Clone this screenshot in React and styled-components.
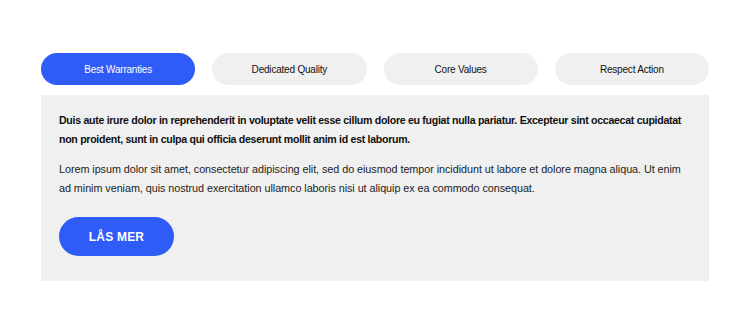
import React, { useState } from "react";
import styled, { createGlobalStyle } from "styled-components";

const GlobalStyle = createGlobalStyle`
  html, body {
    margin: 0;
    padding: 0;
    background: #ffffff;
  }
  body {
    font-family: "Liberation Sans", Arial, sans-serif;
  }
`;

const tabs = ["Best Warranties", "Dedicated Quality", "Core Values", "Respect Action"];

const App = () => {
  const [active, setActive] = useState(0);
  return (
    <>
      <GlobalStyle />
      <Page>
        <TabRow>
          {tabs.map((t, i) => (
            <Tab key={t} $active={i === active} onClick={() => setActive(i)}>
              {t}
            </Tab>
          ))}
        </TabRow>
        <Panel>
          <Lead>
            Duis aute irure dolor in reprehenderit in voluptate velit esse cillum dolore eu fugiat nulla pariatur. Excepteur sint occaecat cupidatat non proident, sunt in culpa qui officia deserunt mollit anim id est laborum.
          </Lead>
          <Body>
            Lorem ipsum dolor sit amet, consectetur adipiscing elit, sed do eiusmod tempor incididunt ut labore et dolore magna aliqua. Ut enim ad minim veniam, quis nostrud exercitation ullamco laboris nisi ut aliquip ex ea commodo consequat.
          </Body>
          <Button>LÅS MER</Button>
        </Panel>
      </Page>
    </>
  );
};
export default App;

const Page = styled.div`
  width: 668px;
  padding: 53px 41px 0;
`;
const TabRow = styled.div`
  display: grid;
  grid-template-columns: repeat(4, 1fr);
  column-gap: 17px;
  margin-bottom: 10px;
`;
const Tab = styled.button`
  height: 32px;
  border: none;
  border-radius: 16px;
  background: ${(p) => (p.$active ? "#2f5bf6" : "#f0f0f0")};
  color: ${(p) => (p.$active ? "#ffffff" : "#111111")};
  font-family: "Liberation Sans", Arial, sans-serif;
  font-size: 10px;
  letter-spacing: -0.2px;
  cursor: pointer;
`;
const Panel = styled.div`
  background: #f0f0f0;
  height: 186px;
  box-sizing: border-box;
  padding: 16px 18px 0;
`;
const Lead = styled.p`
  margin: 0;
  font-size: 10.6px;
  font-weight: bold;
  letter-spacing: -0.3px;
  line-height: 19px;
  color: #111;
`;
const Body = styled.p`
  margin: 11px 0 0;
  font-size: 10.8px;
  letter-spacing: -0.05px;
  line-height: 19px;
  color: #222;
`;
const Button = styled.button`
  margin-top: 19px;
  width: 115px;
  height: 39px;
  border: none;
  border-radius: 20px;
  background: #2f5bf6;
  color: #fff;
  font-family: "Liberation Sans", Arial, sans-serif;
  font-size: 12px;
  font-weight: bold;
  letter-spacing: 0.2px;
  cursor: pointer;
`;
